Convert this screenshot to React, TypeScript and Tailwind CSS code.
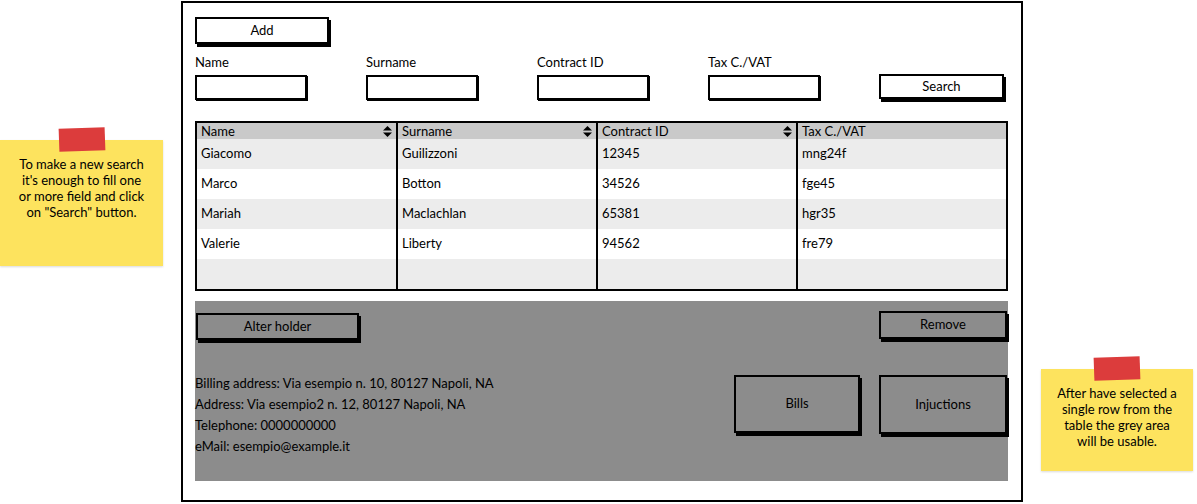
import type { ReactNode } from 'react';

const ROWS = [
  ['Giacomo', 'Guilizzoni', '12345', 'mng24f'],
  ['Marco', 'Botton', '34526', 'fge45'],
  ['Mariah', 'Maclachlan', '65381', 'hgr35'],
  ['Valerie', 'Liberty', '94562', 'fre79'],
  ['', '', '', ''],
];

const HEAD = [
  { label: 'Name', sort: true },
  { label: 'Surname', sort: true },
  { label: 'Contract ID', sort: true },
  { label: 'Tax C./VAT', sort: false },
];

function SortIcon() {
  return (
    <svg width="9" height="11" viewBox="0 0 9 11" className="shrink-0">
      <path d="M4.5 0 L9 4.5 L0 4.5 Z" fill="#000" />
      <path d="M0 6.5 L9 6.5 L4.5 11 Z" fill="#000" />
    </svg>
  );
}

function SketchButton({ children, className }: { children: ReactNode; className: string }) {
  return (
    <button
      className={`flex items-center justify-center border-2 border-black text-[13px] text-black shadow-[2px_3px_0_#000] ${className}`}
    >
      {children}
    </button>
  );
}

function Field({ label }: { label: string }) {
  return (
    <div className="flex w-[112px] flex-col gap-[5px]">
      <span className="text-[13px] leading-[16px]">{label}</span>
      <div className="h-[25px] w-[112px] border-2 border-black bg-white shadow-[1px_1px_0_#000]" />
    </div>
  );
}

function StickyNote({ lines, className }: { lines: string[]; className: string }) {
  return (
    <div className={`absolute ${className}`}>
      <div className="relative flex h-full w-full flex-col items-center bg-[#fde35e] pt-[16px] text-center text-[13px] leading-[16px] text-black shadow-[0_1px_2px_rgba(0,0,0,0.15)]">
        <div className="absolute -top-[12px] left-1/2 h-[23px] w-[46px] -translate-x-1/2 -rotate-2 bg-[#dc3c3c]" />
        {lines.map((l) => (
          <span key={l}>{l}</span>
        ))}
      </div>
    </div>
  );
}

export default function App() {
  return (
    <div
      className="relative h-[504px] w-[1197px] overflow-hidden bg-white text-black"
      style={{ fontFamily: 'Lato, "Open Sans", sans-serif' }}
    >
      <div className="ml-[181px] mt-[1px] flex h-[501px] w-[842px] flex-col border-2 border-black pl-[12px] pr-[13px]">
        {/* toolbar */}
        <SketchButton className="mt-[14px] h-[27px] w-[134px] bg-white">Add</SketchButton>

        {/* search fields */}
        <div className="mt-[10px] flex items-end gap-[59px]">
          <Field label="Name" />
          <Field label="Surname" />
          <Field label="Contract ID" />
          <Field label="Tax C./VAT" />
          <SketchButton className="mb-[1px] h-[25px] w-[125px] bg-white">Search</SketchButton>
        </div>

        {/* results table */}
        <div className="mt-[21px] grid h-[170px] grid-cols-[201px_200px_200px_1fr] border-2 border-black">
          {HEAD.map((h, i) => (
            <div
              key={h.label}
              className={`flex h-[16px] items-center justify-between bg-[#c9c9c9] pl-[4px] pr-[4px] text-[13px] leading-[16px] ${
                i < 3 ? 'border-r-2 border-black' : ''
              }`}
            >
              <span>{h.label}</span>
              {h.sort && <SortIcon />}
            </div>
          ))}
          {ROWS.map((row, r) =>
            row.map((cell, c) => (
              <div
                key={`${r}-${c}`}
                className={`flex h-[30px] items-center pl-[4px] text-[13px] ${r % 2 === 0 ? 'bg-[#ececec]' : 'bg-white'} ${
                  c < 3 ? 'border-r-2 border-black' : ''
                }`}
              >
                {cell}
              </div>
            )),
          )}
        </div>

        {/* detail area */}
        <div className="mt-[10px] flex h-[180px] flex-col bg-[#8c8c8c] pr-[1px]">
          <div className="mt-[12px] flex items-start justify-between">
            <SketchButton className="ml-[1px] h-[27px] w-[163px]">Alter holder</SketchButton>
            <SketchButton className="-mt-[2px] h-[28px] w-[128px]">Remove</SketchButton>
          </div>
          <div className="mt-[35px] flex items-start justify-between">
            <div className="-mt-[2px] flex flex-col text-[13px] leading-[21px]">
              <span>Billing address: Via esempio n. 10, 80127 Napoli, NA</span>
              <span>Address: Via esempio2 n. 12, 80127 Napoli, NA</span>
              <span>Telephone: 0000000000</span>
              <span>eMail: esempio@example.it</span>
            </div>
            <div className="flex gap-[19px]">
              <SketchButton className="h-[58px] w-[126px]">Bills</SketchButton>
              <SketchButton className="h-[59px] w-[128px]">Injuctions</SketchButton>
            </div>
          </div>
        </div>
      </div>

      <StickyNote
        className="left-0 top-[140px] h-[126px] w-[163px]"
        lines={['To make a new search', "it's enough to fill one", 'or more field and click', 'on "Search" button.']}
      />
      <StickyNote
        className="left-[1041px] top-[369px] h-[102px] w-[152px]"
        lines={['After have selected a', 'single row from the', 'table the grey area', 'will be usable.']}
      />
    </div>
  );
}
